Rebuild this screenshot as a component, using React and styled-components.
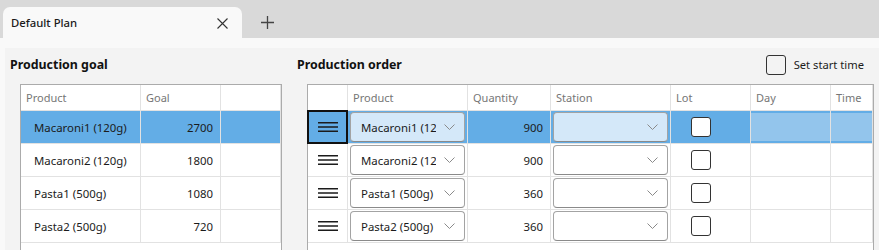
import React from "react";
import styled, { createGlobalStyle } from "styled-components";

const GlobalStyle = createGlobalStyle`
  html, body {
    margin: 0;
    padding: 0;
    background: #f9f9f9;
    font-family: "Noto Sans", "Open Sans", sans-serif;
    color: #1b1b1b;
  }
`;

const goals = [
  { product: "Macaroni1 (120g)", goal: 2700 },
  { product: "Macaroni2 (120g)", goal: 1800 },
  { product: "Pasta1 (500g)", goal: 1080 },
  { product: "Pasta2 (500g)", goal: 720 },
];

const orders = [
  { product: "Macaroni1 (120g)", qty: 900 },
  { product: "Macaroni2 (120g)", qty: 900 },
  { product: "Pasta1 (500g)", qty: 360 },
  { product: "Pasta2 (500g)", qty: 360 },
];

const SELECTED = "#63ade6";

const Chevron = () => (
  <svg width="11" height="6" viewBox="0 0 11 6">
    <path d="M0.5 0.5 L5.5 5.5 L10.5 0.5" fill="none" stroke="#8a8a8a" strokeWidth="1" />
  </svg>
);

const Hamburger = () => (
  <svg width="20" height="10" viewBox="0 0 20 10">
    <path d="M0 0.75 H20 M0 5 H20 M0 9.25 H20" stroke="#1b1b1b" strokeWidth="1.3" />
  </svg>
);

const App = () => (
  <>
    <GlobalStyle />
    <TabStrip>
      <Tab>
        <TabTitle>Default Plan</TabTitle>
        <TabClose>
          <svg width="11" height="11" viewBox="0 0 11 11">
            <path d="M0.5 0.5 L10.5 10.5 M10.5 0.5 L0.5 10.5" stroke="#333" strokeWidth="1.1" />
          </svg>
        </TabClose>
      </Tab>
      <AddTab>
        <svg width="13" height="13" viewBox="0 0 13 13">
          <path d="M6.5 0 V13 M0 6.5 H13" stroke="#444" strokeWidth="1.3" />
        </svg>
      </AddTab>
    </TabStrip>
    <Panel>
      <GoalSection>
        <TitleRow>
          <Title>Production goal</Title>
        </TitleRow>
        <Grid $cols="120px 80px 1fr" $trail="10px">
          <HeaderCell>Product</HeaderCell>
          <HeaderCell>Goal</HeaderCell>
          <HeaderCell />
          {goals.map((g, i) => (
            <React.Fragment key={g.product}>
              <Cell $selected={i === 0} $pad="13px">{g.product}</Cell>
              <Cell $selected={i === 0} $right>{g.goal}</Cell>
              <Cell $selected={i === 0} />
            </React.Fragment>
          ))}
        </Grid>
      </GoalSection>
      <OrderSection>
        <TitleRow>
          <Title>Production order</Title>
          <StartTime>
            <CheckBox />
            Set start time
          </StartTime>
        </TitleRow>
        <Grid $cols="40px 120px 83px 120px 80px 80px 1fr">
          <HeaderCell />
          <HeaderCell>Product</HeaderCell>
          <HeaderCell>Quantity</HeaderCell>
          <HeaderCell>Station</HeaderCell>
          <HeaderCell>Lot</HeaderCell>
          <HeaderCell>Day</HeaderCell>
          <HeaderCell>Time</HeaderCell>
          {orders.map((o, i) => {
            const sel = i === 0;
            return (
              <React.Fragment key={o.product}>
                <HandleCell $selected={sel}>
                  <Hamburger />
                </HandleCell>
                <Cell $selected={sel} $pad="2px">
                  <Combo $selected={sel}>
                    <ComboText>{o.product}</ComboText>
                    <Chevron />
                  </Combo>
                </Cell>
                <Cell $selected={sel} $right>{o.qty}</Cell>
                <Cell $selected={sel} $pad="2px">
                  <Combo $selected={sel}>
                    <ComboText />
                    <Chevron />
                  </Combo>
                </Cell>
                <Cell $selected={sel} $pad="20px">
                  <CheckBox $white />
                </Cell>
                <Cell $soft={sel} />
                <Cell $soft={sel} />
              </React.Fragment>
            );
          })}
        </Grid>
      </OrderSection>
    </Panel>
  </>
);

export default App;

const TabStrip = styled.div`
  display: flex;
  align-items: flex-end;
  height: 38px;
  background: #d9d9d9;
  padding-left: 3px;
`;

const Tab = styled.div`
  width: 239px;
  height: 31px;
  box-sizing: border-box;
  background: #f9f9f9;
  border-radius: 7px 7px 0 0;
  display: flex;
  align-items: center;
  justify-content: space-between;
  padding: 0 14px 0 8px;
`;

const TabTitle = styled.span`
  font-size: 11.3px;
  font-weight: 500;
  color: #1a1a1a;
`;

const TabClose = styled.span`
  display: flex;
  margin-top: 2px;
`;

const AddTab = styled.div`
  width: 50px;
  height: 31px;
  display: flex;
  align-items: center;
  justify-content: center;
`;

const Panel = styled.div`
  margin: 10px 0 0 5px;
  height: 202px;
  background: #f3f3f3;
  display: grid;
  grid-template-columns: 287px 1fr;
  overflow: hidden;
`;

const GoalSection = styled.div`
  padding-left: 5px;
  display: flex;
  flex-direction: column;
`;

const OrderSection = styled.div`
  padding: 0 5px;
  display: flex;
  flex-direction: column;
`;

const TitleRow = styled.div`
  display: flex;
  align-items: center;
  justify-content: space-between;
  height: 21px;
  margin: 6px 0 9px;
`;

const Title = styled.span`
  font-size: 12.4px;
  font-weight: 700;
  color: #111;
`;

const StartTime = styled.label`
  display: flex;
  align-items: center;
  gap: 8px;
  font-size: 11.2px;
  color: #1b1b1b;
  margin-right: 10px;
`;

const CheckBox = styled.span`
  display: block;
  width: 20px;
  height: 20px;
  box-sizing: border-box;
  border: 1.5px solid #333;
  border-radius: 3px;
  background: ${(p) => (p.$white ? "#fff" : "transparent")};
`;

const Grid = styled.div`
  margin: 0 ${(p) => p.$trail || "0"} 0 10px;
  flex: 1;
  display: grid;
  grid-template-columns: ${(p) => p.$cols};
  grid-template-rows: 26px repeat(4, 33px);
  align-content: start;
  background: #fff;
  border: 1px solid #ababab;
  border-bottom: none;
`;

const HeaderCell = styled.div`
  font-size: 11px;
  color: #767676;
  padding: 0 5px;
  display: flex;
  align-items: center;
  border-right: 1px solid #e2e2e2;
  border-bottom: 1px solid #e2e2e2;
  white-space: nowrap;
`;

const Cell = styled.div`
  font-size: 11.4px;
  color: #1b1b1b;
  display: flex;
  align-items: center;
  justify-content: ${(p) => (p.$right ? "flex-end" : "flex-start")};
  padding: ${(p) => (p.$right ? "0 7px 0 0" : `0 ${p.$pad === "2px" ? "2px" : "0"} 0 ${p.$pad || "0"}`)};
  background: ${(p) => (p.$selected ? SELECTED : p.$soft ? "#93c5ec" : "transparent")};
  box-shadow: ${(p) => (p.$soft ? `inset 0 2px 0 ${SELECTED}, inset 0 -2px 0 ${SELECTED}` : "none")};
  border-right: 1px solid #e2e2e2;
  border-bottom: 1px solid #e2e2e2;
  white-space: nowrap;
  min-width: 0;
`;

const HandleCell = styled.div`
  display: flex;
  align-items: center;
  justify-content: center;
  box-sizing: border-box;
  background: ${(p) => (p.$selected ? SELECTED : "transparent")};
  border: ${(p) => (p.$selected ? "2px solid #111" : "none")};
  border-right: ${(p) => (p.$selected ? "2px solid #111" : "1px solid #e2e2e2")};
  border-bottom: ${(p) => (p.$selected ? "2px solid #111" : "1px solid #e2e2e2")};
  margin: ${(p) => (p.$selected ? "-1px 0 0 -1px" : "0")};
`;

const Combo = styled.div`
  flex: 1;
  min-width: 0;
  height: 30px;
  box-sizing: border-box;
  display: flex;
  align-items: center;
  gap: 8px;
  padding: 0 9px 0 10px;
  background: ${(p) => (p.$selected ? "#d4e8f9" : "#fff")};
  border: 1px solid #a3a3a3;
  border-bottom: 1.5px solid #8a8a8a;
  border-radius: 4px;
  font-size: 11.4px;
`;

const ComboText = styled.span`
  flex: 1;
  overflow: hidden;
  white-space: nowrap;
  color: #1b1b1b;
`;
